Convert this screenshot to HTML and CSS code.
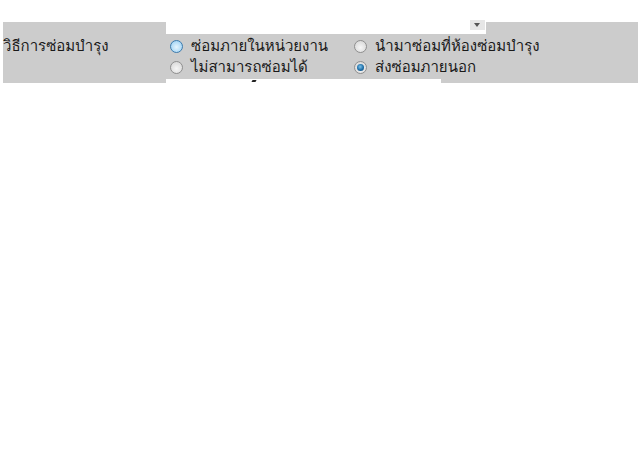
FILE: index.html
```html
<!DOCTYPE html>
<html lang="th">
<head>
<meta charset="utf-8">
<link rel="stylesheet" href="styles.css">
</head>
<body>
<div class="page">
  <div class="row">
    <div class="label">วิธีการซ่อมบำรุง</div>
    <div class="value">
      <div class="select-stub"><span class="arrow"></span></div>
      <div class="options">
        <label class="opt"><span class="radio hover"></span><span class="txt">ซ่อมภายในหน่วยงาน</span></label>
        <label class="opt"><span class="radio"></span><span class="txt">นำมาซ่อมที่ห้องซ่อมบำรุง</span></label>
        <label class="opt"><span class="radio"></span><span class="txt">ไม่สามารถซ่อมได้</span></label>
        <label class="opt"><span class="radio checked"></span><span class="txt">ส่งซ่อมภายนอก</span></label>
      </div>
      <div class="bottom-stub"><span class="mark"></span></div>
    </div>
  </div>
</div>
</body>
</html>
```
FILE: styles.css
```css
html, body {
  margin: 0;
  padding: 0;
  background: #ffffff;
}
body {
  font-family: Tahoma, "Loma", "Garuda", "Norasi", "Tlwg Typo", "Noto Sans Thai Looped", "Noto Sans Thai", "Noto Sans", "DejaVu Sans", sans-serif;
  font-size: 15px;
  color: #1a1a1a;
}
.page {
  padding: 22px 0 0 3px;
}
.row {
  display: flex;
  height: 61px;
  background: #cccccc;
}
.label {
  width: 163px;
  padding-top: 14px;
  line-height: 20px;
}
.value {
  position: relative;
  flex: 1;
}
.select-stub {
  position: absolute;
  left: 0;
  top: -8px;
  width: 320px;
  height: 20px;
  background: #ffffff;
}
.arrow {
  position: absolute;
  left: 304px;
  top: 6px;
  width: 15px;
  height: 10px;
  background: #e6e6e6;
}
.arrow::after {
  content: "";
  position: absolute;
  left: 4px;
  top: 3px;
  border-left: 3.5px solid transparent;
  border-right: 3.5px solid transparent;
  border-top: 4px solid #555;
}
.bottom-stub {
  position: absolute;
  left: 0;
  top: 57px;
  width: 275px;
  height: 4px;
  background: #ffffff;
}
.mark {
  position: absolute;
  left: 86px;
  top: 1px;
  width: 4px;
  height: 2px;
  background: #222;
  transform: skewX(-30deg);
}
.options {
  display: grid;
  grid-template-columns: 184px 1fr;
  padding: 14px 0 0 4px;
  row-gap: 1px;
}
.opt {
  display: flex;
  align-items: center;
  height: 20px;
  white-space: nowrap;
}
.txt {
  display: block;
  height: 20px;
  line-height: 20px;
}
.radio {
  width: 11px;
  height: 11px;
  border-radius: 50%;
  border: 1px solid #8f8f8f;
  background: radial-gradient(circle at 50% 60%, #f6f6f6 0%, #e2e2e2 55%, #d4d4d4 100%);
  margin-right: 8px;
  flex: none;
  box-sizing: content-box;
  position: relative;
}
.radio.hover {
  border-color: #3d7bad;
  background: radial-gradient(circle at 50% 55%, #e5f4fd 0%, #b3dcf7 60%, #8ec8ef 100%);
}
.radio.checked::after {
  content: "";
  position: absolute;
  left: 2px;
  top: 2px;
  width: 7px;
  height: 7px;
  border-radius: 50%;
  background: radial-gradient(circle at 45% 40%, #7fc3ea 0%, #1f6fa8 55%, #0d3e69 100%);
}
```
